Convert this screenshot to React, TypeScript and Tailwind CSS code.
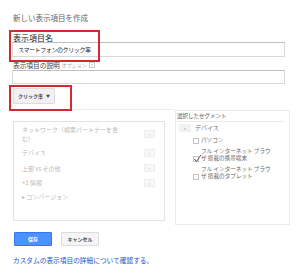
import React from "react";

const dimItems = [
  { label: <>ネットワーク（検索パートナーを含<br />む）</>, h: "h-[20px]", btn: true },
  { label: "デバイス", h: "h-[17px]", btn: true },
  { label: "上部 vs その他", h: "h-[14px]", btn: true },
  { label: "+1 情報", h: "h-[15px]", btn: true },
  { label: "▸ コンバージョン", h: "h-[12px]", btn: false },
];

const segments = [
  { label: "パソコン", checked: false },
  { label: <>フル インターネット ブラウ<br />ザ 搭載の携帯端末</>, checked: true },
  { label: <>フル インターネット ブラウ<br />ザ 搭載のタブレット</>, checked: false },
];

function Checkbox({ checked }: { checked: boolean }) {
  return (
    <span className="relative block h-[6px] w-[6px] shrink-0 border border-[#c4c4c4] bg-white">
      {checked ? (
        <svg className="absolute -left-[1px] -top-[3px]" width="9" height="9" viewBox="0 0 9 9">
          <path d="M1.5 5 L3.5 7.5 L8 1" fill="none" stroke="#555" strokeWidth="1" />
        </svg>
      ) : null}
    </span>
  );
}

export default function App() {
  return (
    <div className="relative h-[276px] w-[300px] overflow-hidden bg-white pl-[12px] pt-[13px] font-['Noto_Sans_CJK_JP',sans-serif]">
      <div className="pl-px text-[7.5px] leading-[10px] text-[#666]">新しい表示項目を作成</div>

      <div className="mt-[10px] pl-px text-[8px] leading-[9px] text-[#222]">表示項目名</div>
      <div className="flex h-[15px] w-[273px] items-center border border-[#d9d9d9] border-t-[#c0c0c0] pl-[5px] text-[6px] tracking-[-0.4px] text-[#222]">
        スマートフォンのクリック率
      </div>

      <div className="mt-[4px] flex h-[8px] items-center gap-[2px] pl-px leading-[8px]">
        <span className="text-[6.7px] text-[#444]">表示項目の説明</span>
        <span className="text-[5px] text-[#aaa]">オプション</span>
        <span className="flex h-[6px] w-[6px] items-center justify-center border border-[#ccc] text-[4px] leading-none text-[#999]">?</span>
      </div>
      <div className="mt-[1px] h-[14px] w-[273px] border border-[#d9d9d9] border-t-[#c0c0c0]" />

      <div className="ml-px mt-[4px] flex h-[16px] w-[42px] items-center justify-center gap-[3px] rounded-[1px] border border-[#dcdcdc] bg-[#f1f1f1] text-[5px] font-bold text-[#444]">
        クリック率
        <span className="text-[4px]">▼</span>
      </div>

      <div className="flex items-start">
        <div className="w-[163px]">
          <div className="mt-[5px] border-t border-[#ececec]" />
          <div className="ml-px mt-[11px] h-[100px] w-[152px] border border-[#e3e3e3] pt-[2px]">
            {dimItems.map((item, i) => (
              <div key={i} className={`flex items-center pl-[8px] pr-[9px] ${item.h}`}>
                <span className="text-[6px] leading-[9px] text-[#b8b8b8]">{item.label}</span>
                {item.btn ? (
                  <span className="ml-auto flex h-[8px] w-[11px] items-center justify-center border border-[#eeeeee] bg-[#f7f7f7] text-[4px] leading-none text-[#c4c4c4]">
                    »
                  </span>
                ) : null}
              </div>
            ))}
          </div>
        </div>

        <div className="mt-[6px] h-[115px] w-[115px] border border-[#ebebeb]">
          <div className="ml-px mr-[4px] mt-px border-b border-[#ebebeb] pb-px text-[5.5px] leading-[8px] text-[#555]">選択したセグメント</div>
          <div className="mt-[2px] flex h-[8px] items-center pl-[3px]">
            <span className="flex h-[8px] w-[12px] items-center justify-center bg-[#f1f1f1] text-[4px] leading-none text-[#888]">«</span>
            <span className="ml-[4px] text-[6px] leading-[8px] text-[#666]">デバイス</span>
          </div>
          <div className="mt-[5px] flex flex-col gap-[3px] pl-[17px]">
            {segments.map((s, i) => (
              <div key={i} className="flex items-end gap-[2px]">
                <span className="mb-[1px]">
                  <Checkbox checked={s.checked} />
                </span>
                <span className="text-[5.6px] leading-[7.5px] text-[#666]">{s.label}</span>
              </div>
            ))}
          </div>
        </div>
      </div>

      <div className="mt-[7px] flex items-center pl-[2px]">
        <div className="flex h-[14px] w-[38px] items-center justify-center rounded-[1px] border border-[#3079ed] bg-[#4d90fe] text-[5px] font-bold text-white">
          保存
        </div>
        <div className="ml-[9px] flex h-[14px] w-[38px] items-center justify-center rounded-[1px] border border-[#dcdcdc] bg-[#f5f5f5] text-[5px] font-bold text-[#444]">
          キャンセル
        </div>
      </div>

      <div className="mt-[10px] pl-px text-[6.7px] leading-[8px] text-[#1a57c9]">カスタムの表示項目の詳細について確認する。</div>

      <div className="absolute left-[9px] top-[30px] h-[32px] w-[91px] border-2 border-[#d42a2f]" />
      <div className="absolute left-[9px] top-[85px] h-[26px] w-[63px] border-2 border-[#d42a2f]" />
    </div>
  );
}
